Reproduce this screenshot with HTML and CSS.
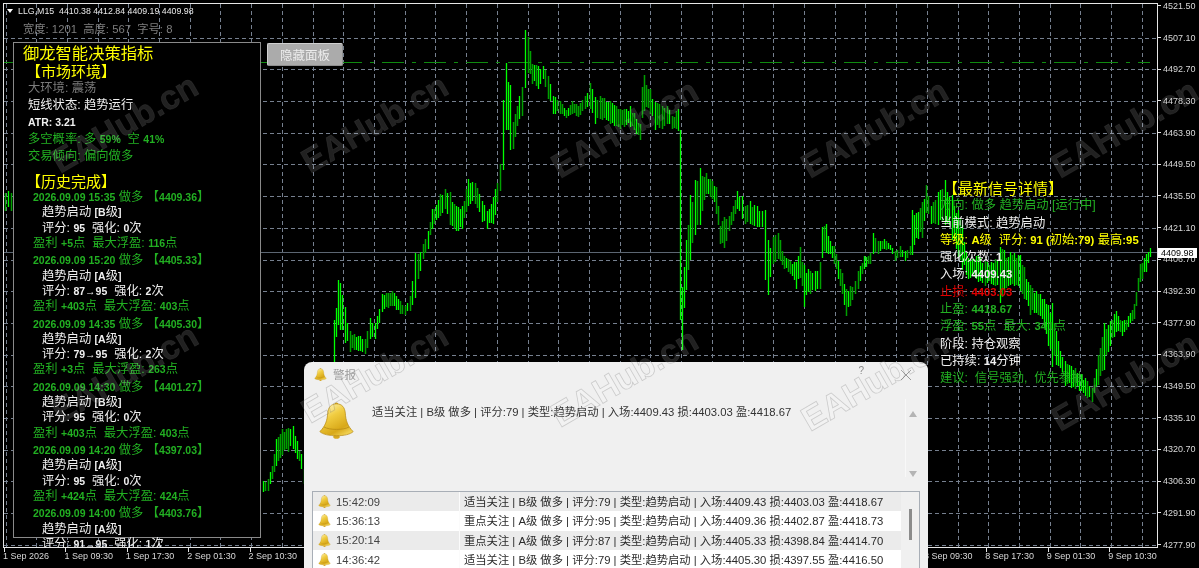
FILE: index.html
```html
<!DOCTYPE html>
<html lang="zh-CN">

<head>
    <meta charset="UTF-8">
    <title>LLG,M15</title>
    <link rel="stylesheet" href="styles.css">
</head>

<body>
    <svg class="defs" width="0" height="0">
        <defs>
            <linearGradient id="bellFill" x1="0.1" y1="0" x2="0.7" y2="1">
                <stop offset="0" stop-color="#fff6b8" />
                <stop offset="0.4" stop-color="#f0cc40" />
                <stop offset="0.8" stop-color="#d8a818" />
                <stop offset="1" stop-color="#f0d050" />
            </linearGradient>
            <symbol id="bell" viewBox="0 0 40 40">
                <ellipse cx="20" cy="37.500" rx="3.500" ry="2.300" fill="#d8a820" />
                <circle cx="20" cy="2.500" r="2" fill="#c99a1c" />
                <path d="M20 2C14 2 11 6 10.500 12C10 20 8 26 2 32C5 35 12 36.500 20 36.500C28 36.500 35 35 38 32C32 26 30 20 29.500 12C29 6 26 2 20 2Z"
                    fill="url(#bellFill)" stroke="#b88c14" stroke-width="0.8" />
                <path d="M6.500 27C12 30.500 28 30.500 33.500 27" fill="none" stroke="#b88c14" stroke-width="0.9" />
            </symbol>
        </defs>
    </svg>

    <div class="terminal">
        <div class="plot">
            <svg id="chart" class="chart" width="1199" height="568"></svg>

            <div class="chart-title"><i class="caret"></i>LLG,M15&nbsp; 4410.38 4412.84 4409.19 4409.98</div>
            <div class="chart-size">宽度: 1201&nbsp; 高度: 567&nbsp; 字号: 8</div>

            <div class="panel">
                <div class="panel-title">御龙智能决策指标</div>
                <div class="panel-head">【市场环境】</div>
                <div class="env">
                    <div class="gry">大环境: 震荡</div>
                    <div class="wht">短线状态: 趋势运行</div>
                    <div class="wht"><b>ATR: 3.21</b></div>
                    <div class="grn">多空概率: 多 <b>59%</b>&nbsp; 空 <b>41%</b></div>
                    <div class="grn">交易倾向: 偏向做多</div>
                </div>
                <div class="panel-head history">【历史完成】</div>

                <div class="trade">
                    <div class="grn"><b>2026.09.09 15:35</b> 做多 【<b>4409.36</b>】</div>
                    <div class="wht sub">趋势启动 <b>[B</b>级<b>]</b></div>
                    <div class="wht sub">评分: <b>95</b>&nbsp; 强化: <b>0</b>次</div>
                    <div class="grn">盈利 <b>+5</b>点&nbsp; 最大浮盈: <b>116</b>点</div>
                </div>
                <div class="trade">
                    <div class="grn"><b>2026.09.09 15:20</b> 做多 【<b>4405.33</b>】</div>
                    <div class="wht sub">趋势启动 <b>[A</b>级<b>]</b></div>
                    <div class="wht sub">评分: <b>87→95</b>&nbsp; 强化: <b>2</b>次</div>
                    <div class="grn">盈利 <b>+403</b>点&nbsp; 最大浮盈: <b>403</b>点</div>
                </div>
                <div class="trade">
                    <div class="grn"><b>2026.09.09 14:35</b> 做多 【<b>4405.30</b>】</div>
                    <div class="wht sub">趋势启动 <b>[A</b>级<b>]</b></div>
                    <div class="wht sub">评分: <b>79→95</b>&nbsp; 强化: <b>2</b>次</div>
                    <div class="grn">盈利 <b>+3</b>点&nbsp; 最大浮盈: <b>263</b>点</div>
                </div>
                <div class="trade">
                    <div class="grn"><b>2026.09.09 14:30</b> 做多 【<b>4401.27</b>】</div>
                    <div class="wht sub">趋势启动 <b>[B</b>级<b>]</b></div>
                    <div class="wht sub">评分: <b>95</b>&nbsp; 强化: <b>0</b>次</div>
                    <div class="grn">盈利 <b>+403</b>点&nbsp; 最大浮盈: <b>403</b>点</div>
                </div>
                <div class="trade">
                    <div class="grn"><b>2026.09.09 14:20</b> 做多 【<b>4397.03</b>】</div>
                    <div class="wht sub">趋势启动 <b>[A</b>级<b>]</b></div>
                    <div class="wht sub">评分: <b>95</b>&nbsp; 强化: <b>0</b>次</div>
                    <div class="grn">盈利 <b>+424</b>点&nbsp; 最大浮盈: <b>424</b>点</div>
                </div>
                <div class="trade">
                    <div class="grn"><b>2026.09.09 14:00</b> 做多 【<b>4403.76</b>】</div>
                    <div class="wht sub">趋势启动 <b>[A</b>级<b>]</b></div>
                    <div class="wht sub">评分: <b>91→95</b>&nbsp; 强化: <b>1</b>次</div>
                </div>
            </div>

            <button class="hide-btn">隐藏面板</button>

            <div class="detail">
                <div class="detail-head">【最新信号详情】</div>
                <div class="grn">方向: 做多 趋势启动 [运行中]</div>
                <div class="wht">当前模式: 趋势启动</div>
                <div class="yel">等级: <b>A</b>级&nbsp; 评分: <b>91 (</b>初始<b>:79)</b> 最高<b>:95</b></div>
                <div class="wht">强化次数: <b>1</b></div>
                <div class="wht">入场: <b>4409.43</b></div>
                <div class="red">止损: <b>4403.03</b></div>
                <div class="grn">止盈: <b>4418.67</b></div>
                <div class="grn">浮盈: <b>55</b>点&nbsp; 最大: <b>341</b>点</div>
                <div class="wht">阶段: 持仓观察</div>
                <div class="wht">已持续: <b>14</b>分钟</div>
                <div class="grn">建议: &nbsp;信号强劲, &nbsp;优先参抽</div>
            </div>
        </div>

        <div class="price-axis">
            <span>4521.50</span>
            <span>4507.10</span>
            <span>4492.70</span>
            <span>4478.30</span>
            <span>4463.90</span>
            <span>4449.50</span>
            <span>4435.50</span>
            <span>4421.10</span>
            <span>4406.70</span>
            <span>4392.30</span>
            <span>4377.90</span>
            <span>4363.90</span>
            <span>4349.50</span>
            <span>4335.10</span>
            <span>4320.70</span>
            <span>4306.30</span>
            <span>4291.90</span>
            <span>4277.90</span>
        </div>
        <div class="price-tag">4409.98</div>

        <div class="time-axis">
            <span>1 Sep 2026</span>
            <span>1 Sep 09:30</span>
            <span>1 Sep 17:30</span>
            <span>2 Sep 01:30</span>
            <span>2 Sep 10:30</span>
            <div class="time-gap"></div>
            <span>8 Sep 09:30</span>
            <span>8 Sep 17:30</span>
            <span>9 Sep 01:30</span>
            <span>9 Sep 10:30</span>
        </div>

        <div class="dialog">
            <div class="dialog-title">
                <svg class="bell-sm"><use href="#bell" /></svg>
                <span class="dialog-name">警报</span>
                <span class="dialog-help">?</span>
                <svg class="dialog-close" viewBox="0 0 10 10"><path d="M0 0L10 10M10 0L0 10" /></svg>
            </div>
            <div class="dialog-body">
                <svg class="bell-lg"><use href="#bell" /></svg>
                <div class="dialog-msg">适当关注 | B级 做多 | 评分:79 | 类型:趋势启动 | 入场:4409.43 损:4403.03 盈:4418.67</div>
                <div class="msg-scroll">
                    <i class="arrow-up"></i>
                    <i class="arrow-down"></i>
                </div>
            </div>
            <div class="alert-list">
                <div class="alert-rows">
                    <div class="alert-row">
                        <div class="alert-time"><svg class="bell-sm"><use href="#bell" /></svg>15:42:09</div>
                        <div class="alert-text">适当关注 | B级 做多 | 评分:79 | 类型:趋势启动 | 入场:4409.43 损:4403.03 盈:4418.67</div>
                    </div>
                    <div class="alert-row">
                        <div class="alert-time"><svg class="bell-sm"><use href="#bell" /></svg>15:36:13</div>
                        <div class="alert-text">重点关注 | A级 做多 | 评分:95 | 类型:趋势启动 | 入场:4409.36 损:4402.87 盈:4418.73</div>
                    </div>
                    <div class="alert-row">
                        <div class="alert-time"><svg class="bell-sm"><use href="#bell" /></svg>15:20:14</div>
                        <div class="alert-text">重点关注 | A级 做多 | 评分:87 | 类型:趋势启动 | 入场:4405.33 损:4398.84 盈:4414.70</div>
                    </div>
                    <div class="alert-row">
                        <div class="alert-time"><svg class="bell-sm"><use href="#bell" /></svg>14:36:42</div>
                        <div class="alert-text">适当关注 | B级 做多 | 评分:79 | 类型:趋势启动 | 入场:4405.30 损:4397.55 盈:4416.50</div>
                    </div>
                </div>
                <div class="list-scroll"><i class="list-thumb"></i></div>
            </div>
        </div>

        <svg class="watermark" width="1199" height="568">
            <text transform="translate(60 174) rotate(-30)">EAHub.cn</text>
            <text transform="translate(310 174) rotate(-30)">EAHub.cn</text>
            <text transform="translate(560 179) rotate(-30)">EAHub.cn</text>
            <text transform="translate(810 179) rotate(-30)">EAHub.cn</text>
            <text transform="translate(1060 179) rotate(-30)">EAHub.cn</text>
            <text transform="translate(60 424) rotate(-30)">EAHub.cn</text>
            <text transform="translate(310 424) rotate(-30)">EAHub.cn</text>
            <text transform="translate(560 428) rotate(-30)">EAHub.cn</text>
            <text transform="translate(810 432) rotate(-30)">EAHub.cn</text>
            <text transform="translate(1060 432) rotate(-30)">EAHub.cn</text>
        </svg>
    </div>

    <script src="chart.js"></script>
</body>

</html>
```

FILE: styles.css
```css
* {
    box-sizing: border-box;
}

body {
    margin: 0;
    background-color: black;
    font-family: "Liberation Sans", "Noto Sans CJK SC", sans-serif;
}

.defs {
    position: absolute;
}

.terminal {
    position: relative;
    width: 1199px;
    height: 568px;
    overflow: hidden;
    background-color: black;
    filter: blur(0.4px);
}

/* chart area, everything inside is clipped at the white frame */
.plot {
    position: absolute;
    top: 3px;
    left: 3px;
    width: 1155px;
    height: 545px;
    border: 1px solid #e6e6e6;
    overflow: hidden;
}

.chart {
    position: absolute;
    top: -4px;
    left: -4px;
}

.chart-title {
    position: absolute;
    top: 1px;
    left: 3px;
    font-size: 8.8px;
    line-height: 12px;
    color: #e8e8e8;
    white-space: nowrap;
}

.caret {
    display: inline-block;
    width: 0;
    height: 0;
    margin: 0 5px 1px 0;
    border-left: 3.5px solid transparent;
    border-right: 3.5px solid transparent;
    border-top: 4px solid white;
}

.chart-size {
    position: absolute;
    top: 17px;
    left: 19px;
    font-size: 11.3px;
    line-height: 16px;
    color: #7d7d7d;
    white-space: nowrap;
}

.panel {
    position: absolute;
    top: 38px;
    left: 9px;
    width: 248px;
    height: 496px;
    padding: 1px 0 0 9px;
    background-color: black;
    border: 1px solid #8a8a8a;
    font-size: 12.3px;
    white-space: nowrap;
}

.panel b {
    font-size: 10.5px;
}

.panel-title {
    font-size: 16.3px;
    line-height: 18px;
    color: yellow;
}

.panel-head {
    margin-top: 1px;
    margin-left: 3px;
    font-size: 15px;
    line-height: 18px;
    color: yellow;
}

.history {
    margin-top: 7.5px;
    margin-bottom: -0.6px;
}

.env {
    margin-top: -1px;
    margin-left: 5px;
    line-height: 17px;
}

.trade {
    height: 63.3px;
    margin-left: 10px;
    line-height: 15.3px;
}

.sub {
    margin-left: 9px;
}

.yel {
    color: yellow;
}

.grn {
    color: #22b022;
}

.wht {
    color: #f0f0f0;
}

.gry {
    color: #7a7a7a;
}

.red {
    color: #e00000;
}

.hide-btn {
    position: absolute;
    top: 39px;
    left: 263px;
    width: 76px;
    height: 23px;
    padding: 0;
    background-color: #ababab;
    border: 1px solid #8f8f8f;
    border-top-color: #d0d0d0;
    border-left-color: #d0d0d0;
    border-radius: 2px;
    color: #ececec;
    font-family: inherit;
    font-size: 12.5px;
}

.detail {
    position: absolute;
    top: 176px;
    left: 936px;
    font-size: 12.3px;
    line-height: 17.3px;
    white-space: nowrap;
}

.detail b {
    font-size: 11.3px;
}

.detail-head {
    margin-left: 3px;
    font-size: 15px;
    color: yellow;
}

.price-axis {
    position: absolute;
    top: -10px;
    left: 1158px;
    display: flex;
    flex-direction: column;
}

.price-axis span {
    display: flex;
    align-items: center;
    height: 31.7px;
    font-size: 9px;
    color: #d8d8d8;
}

.price-axis span::before {
    content: "";
    width: 3px;
    height: 1px;
    margin-right: 2px;
    background-color: #e6e6e6;
}

.price-tag {
    position: absolute;
    top: 248px;
    left: 1158px;
    width: 39px;
    height: 10px;
    padding-left: 3px;
    background-color: white;
    color: black;
    font-size: 9px;
    line-height: 10px;
}

.time-axis {
    position: absolute;
    top: 548px;
    left: 4px;
    display: flex;
}

.time-axis span {
    flex: 0 0 61.4px;
    height: 4px;
    padding-top: 2px;
    border-left: 1px solid #e6e6e6;
    font-size: 9px;
    line-height: 13px;
    color: #d8d8d8;
    text-indent: -2px;
    white-space: nowrap;
}

.time-gap {
    flex: 0 0 614px;
}

.dialog {
    position: absolute;
    top: 362px;
    left: 304px;
    width: 624px;
    height: 220px;
    padding: 0 8px;
    background-color: #f0f0f0;
    border-radius: 8px 8px 0 0;
    color: #333;
    font-size: 11.3px;
}

.dialog-title {
    position: relative;
    display: flex;
    align-items: center;
    height: 24px;
    margin-left: 1px;
}

.bell-sm {
    flex: none;
    width: 13px;
    height: 13px;
}

.dialog-title .bell-sm {
    margin-left: 1px;
}

.dialog-name {
    margin-left: 6px;
    color: #9a9a9a;
    font-size: 11.5px;
}

.dialog-help {
    position: absolute;
    top: 3px;
    right: 56px;
    color: #8a8a8a;
    font-size: 10px;
}

.dialog-close {
    position: absolute;
    top: 8px;
    right: 9px;
    width: 10px;
    height: 10px;
    stroke: #999;
    stroke-width: 1;
}

.dialog-body {
    display: flex;
    height: 105px;
    padding-top: 16px;
}

.bell-lg {
    flex: none;
    width: 37px;
    height: 37px;
    margin-left: 6px;
}

.dialog-msg {
    flex: 1;
    margin-left: 17px;
    padding-top: 2px;
    line-height: 16px;
    white-space: nowrap;
}

.msg-scroll {
    display: flex;
    flex-direction: column;
    justify-content: space-between;
    width: 15px;
    height: 78px;
    margin-top: -3px;
    padding: 12px 0 0 3px;
    border-left: 1px solid #f8f8f8;
}

.arrow-up,
.arrow-down {
    width: 0;
    height: 0;
    border-left: 4.500px solid transparent;
    border-right: 4.500px solid transparent;
}

.arrow-up {
    border-bottom: 6px solid #b4b4b4;
}

.arrow-down {
    border-top: 6px solid #b4b4b4;
}

.alert-list {
    display: flex;
    height: 100px;
    border: 1px solid #a8aeb6;
    background-color: #f0f0f0;
}

.alert-rows {
    flex: 1;
}

.alert-row {
    display: flex;
    height: 19.300px;
    line-height: 20px;
    white-space: nowrap;
    background-color: white;
}

.alert-row:nth-child(odd) {
    background-color: #ebebeb;
}

.alert-time {
    display: flex;
    align-items: center;
    gap: 5px;
    width: 147px;
    padding-left: 5px;
    border-right: 1px solid #fbfbfb;
    color: #444;
}

.alert-text {
    padding-left: 4px;
    color: #2a2a2a;
}

.list-scroll {
    position: relative;
    width: 18px;
}

.list-thumb {
    position: absolute;
    top: 17px;
    left: 8px;
    width: 3px;
    height: 31px;
    background-color: #8c8c8c;
}

.watermark {
    position: absolute;
    top: 0;
    left: 0;
    pointer-events: none;
}

.watermark text {
    font-family: "Liberation Sans", sans-serif;
    font-size: 34px;
    font-weight: bold;
    fill: rgba(255, 255, 255, 0.13);
    stroke: rgba(90, 90, 90, 0.25);
    stroke-width: 0.8;
}
```

FILE: chart.js
```js
// points picked off the picture: [x, high, low]
const points = [
    [5, 192, 212], [8, 190, 208], [11, 192, 212],
    [263, 480, 493], [268, 478, 492], [272, 465, 480], [276, 437, 467], [282, 428, 456], [288, 427, 453],
    [293, 425, 450], [297, 440, 460], [301, 453, 470], [304, 468, 485],
    [334, 320, 362], [338, 280, 325], [340, 283, 330], [345, 305, 345], [350, 330, 353], [360, 335, 352],
    [365, 338, 355], [370, 317, 340], [375, 322, 340], [382, 293, 313], [392, 290, 307], [400, 300, 315],
    [405, 305, 315], [410, 295, 312], [415, 253, 298], [418, 253, 280], [423, 243, 260], [428, 230, 250],
    [432, 208, 230], [440, 193, 217], [445, 188, 210], [450, 190, 227], [456, 205, 232], [462, 205, 230],
    [468, 178, 207], [475, 182, 205], [482, 200, 223], [487, 210, 230], [493, 195, 225], [500, 163, 192],
    [503, 100, 170], [506, 63, 130], [510, 85, 150], [513, 120, 150], [519, 95, 120], [522, 85, 118],
    [525, 30, 88], [528, 35, 75], [532, 63, 85], [538, 65, 90], [543, 65, 80], [548, 75, 100],
    [553, 95, 115], [560, 100, 115], [566, 110, 118], [572, 100, 115], [578, 105, 118], [585, 95, 110],
    [590, 82, 110], [595, 95, 125], [600, 95, 120], [610, 100, 125], [620, 108, 130], [630, 105, 128],
    [640, 123, 141], [642, 85, 120], [644, 73, 113], [650, 88, 115], [655, 100, 132], [662, 105, 130],
    [667, 105, 125], [672, 115, 130], [678, 108, 132], [680, 130, 320], [682, 287, 350], [686, 240, 290],
    [690, 195, 260], [695, 180, 235], [700, 168, 225], [706, 172, 195], [712, 180, 200], [716, 185, 215],
    [720, 225, 245], [724, 215, 250], [729, 215, 232], [733, 205, 222], [737, 190, 210], [742, 195, 220],
    [745, 205, 225], [750, 200, 225], [757, 205, 228], [762, 210, 228], [765, 210, 280], [768, 240, 295],
    [773, 235, 265], [778, 232, 260], [784, 255, 270], [790, 260, 275], [796, 260, 290], [800, 245, 280],
    [804, 265, 307], [810, 270, 295], [815, 270, 292], [820, 260, 290], [822, 225, 260], [826, 222, 255],
    [830, 240, 255], [834, 245, 265], [838, 260, 280], [842, 272, 295], [846, 287, 317], [850, 285, 307],
    [855, 280, 295], [858, 270, 290], [864, 255, 270], [870, 252, 265], [873, 232, 255], [878, 240, 255],
    [884, 238, 250], [890, 245, 250], [895, 250, 262], [900, 245, 258], [905, 250, 262], [910, 245, 255],
    [912, 210, 255], [918, 210, 240], [922, 200, 240], [926, 183, 215], [931, 205, 225], [938, 190, 227],
    [945, 180, 225], [952, 195, 240], [958, 210, 257], [962, 225, 270], [968, 257, 280], [978, 253, 283],
    [985, 260, 287], [995, 258, 287], [1000, 247, 303], [1010, 250, 287], [1020, 253, 293], [1030, 283, 317],
    [1040, 293, 317], [1052, 303, 367], [1058, 340, 367], [1065, 360, 387], [1075, 367, 390], [1085, 377, 397],
    [1092, 387, 403], [1098, 353, 387], [1104, 323, 370], [1110, 320, 347], [1116, 310, 333], [1122, 320, 337],
    [1128, 315, 328], [1134, 303, 320], [1140, 263, 283], [1146, 253, 273], [1150, 247, 257]
];

const gridY = [38, 69, 101, 133, 164, 196, 228, 260, 291, 323, 355, 386, 418, 450, 481, 513, 545];

const svg = document.getElementById('chart');

function addPath(d, cls) {
    const path = document.createElementNS('http://www.w3.org/2000/svg', 'path');
    path.setAttribute('d', d);
    path.setAttribute('class', cls);
    path.setAttribute('fill', 'none');
    svg.appendChild(path);
    return path;
}

// always the same noise, so the picture does not change between runs
function noise(n) {
    const v = Math.sin(n * 12.9898) * 43758.5453;
    return v - Math.floor(v);
}

function drawGrid() {
    let d = '';
    for (let x = 5.5; x < 1157; x += 30.71) {
        d += `M${Math.round(x) + 0.5} 4V547`;
    }
    gridY.forEach((y) => {
        d += `M4 ${y + 0.5}H1157`;
    });
    const grid = addPath(d, 'grid');
    grid.setAttribute('stroke', '#76808f');
    grid.setAttribute('stroke-dasharray', '4 3');
}

function drawLevels() {
    const target = addPath('M4 62.5H1150', 'target');
    target.setAttribute('stroke', '#0f8a0f');
    target.setAttribute('stroke-dasharray', '22 8 4 8');
    const last = addPath('M4 252.5H1157', 'last');
    last.setAttribute('stroke', '#5c6672');
}

function drawBars() {
    let up = '';
    let down = '';
    let n = 0;

    const bar = (x, hi, lo, bright) => {
        const seg = `M${x.toFixed(1)} ${Math.round(hi)}V${Math.round(lo)}`;
        if (bright) {
            up += seg;
        } else {
            down += seg;
        }
    };

    points.forEach((p, i) => {
        const height = p[2] - p[1];
        // only the tall moves keep their whole length, the rest stays inside the band
        const trim = height > 40 ? 0 : height * 0.05;
        bar(p[0] + 0.5, p[1] + trim, p[2] - trim, height > 40 || noise(i) > 0.5);
        const next = points[i + 1];
        if (!next || next[0] - p[0] > 20) {
            return;
        }
        for (let x = p[0] + 2; x < next[0] - 1; x += 2) {
            const t = (x - p[0]) / (next[0] - p[0]);
            const hi = p[1] + (next[1] - p[1]) * t;
            const lo = p[2] + (next[2] - p[2]) * t;
            const span = lo - hi;
            n += 1;
            const top = hi + span * (0.03 + noise(n) * 0.2);
            const bottom = lo - span * (0.03 + noise(n + 500) * 0.2);
            bar(x + 0.5, top, bottom, noise(n + 900) > 0.5);
        }
    });

    const dark = addPath(down, 'bars');
    dark.setAttribute('stroke', '#00a000');
    dark.setAttribute('stroke-width', '1.5');
    const bright = addPath(up, 'bars');
    bright.setAttribute('stroke', '#00ff00');
    bright.setAttribute('stroke-width', '1.3');
}

drawGrid();
drawLevels();
drawBars();
```
